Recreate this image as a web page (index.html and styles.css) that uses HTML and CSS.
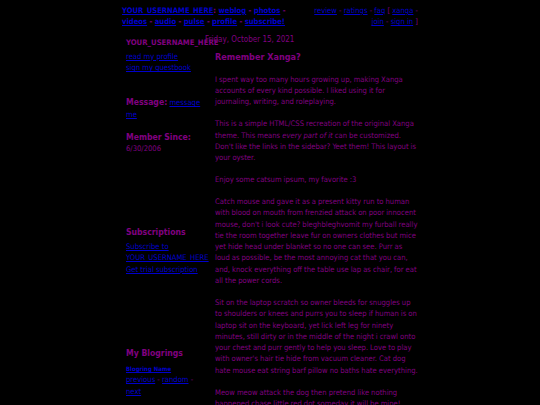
FILE: index.html
```html
<!DOCTYPE html>
<html>
<head>
<meta charset="utf-8">
<title>Xanga</title>
<link rel="stylesheet" href="styles.css">
</head>
<body>
<div class="page">
  <div class="topnav">
    <div class="nav-left"><a href="#" class="strong">YOUR_USERNAME_HERE</a>: <a href="#">weblog</a> - <a href="#">photos</a> - <a href="#">videos</a> - <a href="#">audio</a> - <a href="#">pulse</a> - <a href="#">profile</a> - <a href="#">subscribe!</a></div>
    <div class="nav-right"><a href="#">review</a> - <a href="#">ratings</a> - <a href="#">faq</a> [ <a href="#">xanga</a> - <a href="#">join</a> - <a href="#">sign in</a> ]</div>
  </div>
  <div class="main">
    <aside class="sidebar">
      <div class="side-title">YOUR_USERNAME_HERE</div>
      <div class="side-block links">
        <a href="#">read my profile</a><br>
        <a href="#">sign my guestbook</a>
      </div>
      <div class="side-block message"><span class="label">Message:</span> <a href="#">message me</a></div>
      <div class="side-block since">
        <div class="label">Member Since:</div>
        <div>6/30/2006</div>
      </div>
      <div class="side-block subs">
        <div class="label">Subscriptions</div>
        <a href="#">Subscribe to YOUR_USERNAME_HERE</a><br>
        <a href="#">Get trial subscription</a>
      </div>
      <div class="side-block rings">
        <div class="label">My Blogrings</div>
        <a href="#" class="ring-name">Blogring Name</a><br>
        <a href="#">previous</a> - <a href="#">random</a> - <a href="#">next</a>
      </div>
    </aside>
    <main class="content">
      <div class="date">Friday, October 15, 2021</div>
      <div class="post">
        <div class="post-title">Remember Xanga?</div>
        <p>I spent way too many hours growing up, making Xanga accounts of every kind possible. I liked using it for journaling, writing, and roleplaying.</p>
        <p>This is a simple HTML/CSS recreation of the original Xanga theme. This means <em>every part of it</em> can be customized. Don't like the links in the sidebar? Yeet them! This layout is your oyster.</p>
        <p>Enjoy some catsum ipsum, my favorite :3</p>
        <p>Catch mouse and gave it as a present kitty run to human with blood on mouth from frenzied attack on poor innocent mouse, don't i look cute? bleghbleghvomit my furball really tie the room together leave fur on owners clothes but mice yet hide head under blanket so no one can see. Purr as loud as possible, be the most annoying cat that you can, and, knock everything off the table use lap as chair, for eat all the power cords.</p>
        <p>Sit on the laptop scratch so owner bleeds for snuggles up to shoulders or knees and purrs you to sleep if human is on laptop sit on the keyboard, yet lick left leg for ninety minutes, still dirty or in the middle of the night i crawl onto your chest and purr gently to help you sleep. Love to play with owner's hair tie hide from vacuum cleaner. Cat dog hate mouse eat string barf pillow no baths hate everything.</p>
        <p>Meow meow attack the dog then pretend like nothing happened chase little red dot someday it will be mine!</p>
      </div>
    </main>
  </div>
</div>
</body>
</html>
```
FILE: styles.css
```css
html, body {
  margin: 0;
  padding: 0;
  background: #000;
}
body {
  font-family: "DejaVu Sans Condensed", "DejaVu Sans", sans-serif;
  font-stretch: condensed;
  font-size: 7.6px;
  line-height: 11.3px;
  color: #800080;
}
a {
  color: #0000cc;
  text-decoration: underline;
}
.page {
  width: 296px;
  margin: 0 auto;
}
.topnav {
  display: flex;
  justify-content: space-between;
  padding-top: 5px;
}
.nav-left {
  width: 172px;
  font-weight: bold;
}
.nav-right {
  width: 118px;
  text-align: right;
}
.main {
  display: flex;
  margin-top: 6px;
}
.sidebar {
  width: 79px;
  flex: none;
  padding-left: 4px;
}
.side-title {
  font-weight: bold;
  font-size: 7.7px;
  white-space: nowrap;
  position: relative;
  z-index: 1;
  margin-top: 3px;
}
.links {
  margin-top: 3px;
}
.label {
  font-weight: bold;
  font-size: 8.6px;
}
.message {
  margin-top: 24px;
}
.since {
  margin-top: 12px;
}
.subs {
  margin-top: 72px;
}
.subs .label {
  margin-bottom: 3px;
}
.rings {
  margin-top: 73px;
}
.rings .label {
  margin-bottom: 4px;
}
.ring-name {
  font-size: 6px;
  font-weight: bold;
  line-height: 9px;
}
.content {
  flex: 1;
  min-width: 0;
}
.date {
  font-size: 8px;
}
.post {
  padding-left: 10px;
  word-spacing: -0.15px;
}
.post-title {
  font-weight: bold;
  font-size: 9px;
  margin-top: 7px;
  word-spacing: 0;
}
.post p {
  margin: 10.6px 0 0;
}
```
